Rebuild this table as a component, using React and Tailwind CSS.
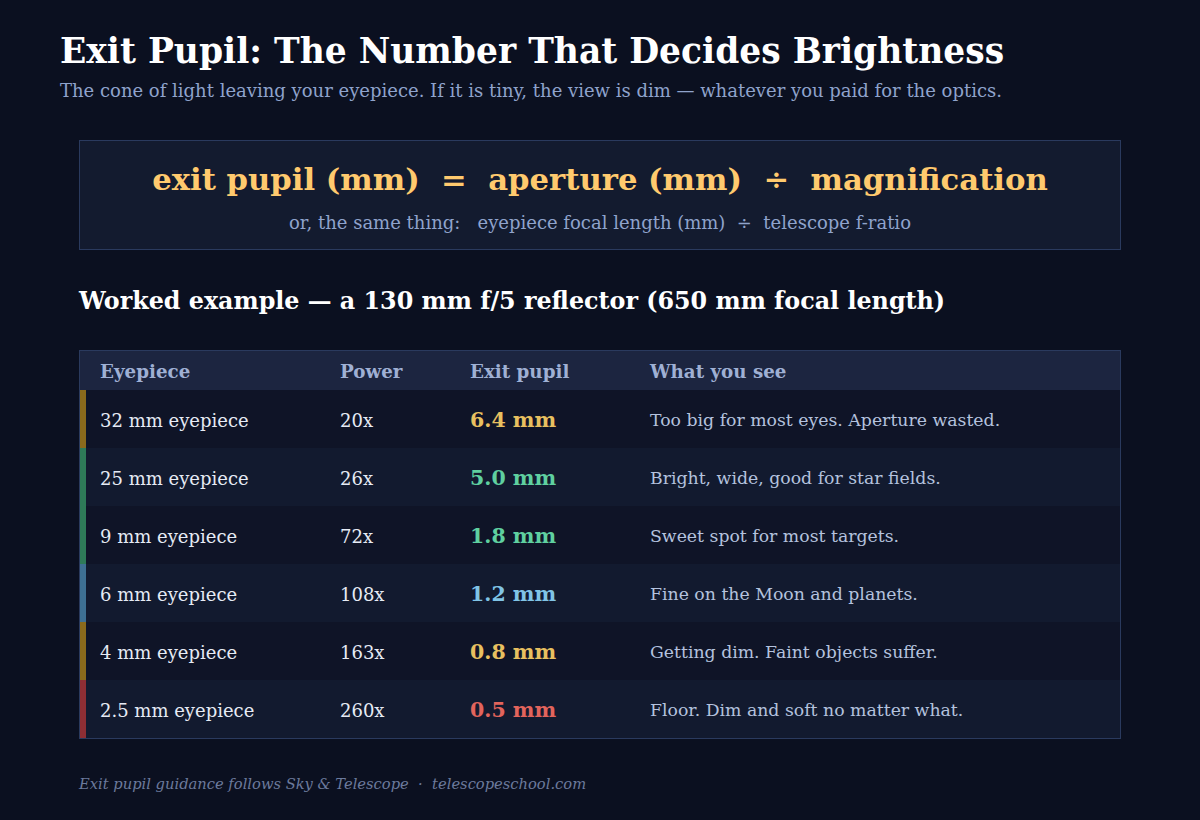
const rows = [
  { ep: '32 mm eyepiece', power: '20x', pupil: '6.4 mm', note: 'Too big for most eyes. Aperture wasted.', bar: 'bg-[#8a6a1c]', text: 'text-[#e8c060]' },
  { ep: '25 mm eyepiece', power: '26x', pupil: '5.0 mm', note: 'Bright, wide, good for star fields.', bar: 'bg-[#2e7a58]', text: 'text-[#5fd0a0]' },
  { ep: '9 mm eyepiece', power: '72x', pupil: '1.8 mm', note: 'Sweet spot for most targets.', bar: 'bg-[#2e7a58]', text: 'text-[#5fd0a0]' },
  { ep: '6 mm eyepiece', power: '108x', pupil: '1.2 mm', note: 'Fine on the Moon and planets.', bar: 'bg-[#3e7093]', text: 'text-[#80c4e6]' },
  { ep: '4 mm eyepiece', power: '163x', pupil: '0.8 mm', note: 'Getting dim. Faint objects suffer.', bar: 'bg-[#8a6a1c]', text: 'text-[#e8c060]' },
  { ep: '2.5 mm eyepiece', power: '260x', pupil: '0.5 mm', note: 'Floor. Dim and soft no matter what.', bar: 'bg-[#8e2e34]', text: 'text-[#e2645c]' },
]

export default function App() {
  return (
    <div className="min-h-[820px] w-[1200px] bg-[#0b1020] px-[60px] pt-[29px] font-['Georgia','DejaVu_Serif',serif]">
      {/* Header */}
      <h1 className="text-[34.5px] font-bold leading-[44px] text-white">
        Exit Pupil: The Number That Decides Brightness
      </h1>
      <p className="mt-[5px] text-[18px] leading-[26px] text-[#8fa3cc]">
        The cone of light leaving your eyepiece. If it is tiny, the view is dim — whatever you paid for the optics.
      </p>

      <div className="px-[19px]">
        {/* Formula */}
        <div className="mt-[36px] flex h-[110px] flex-col items-center justify-center border border-[#2a3a5e] bg-[#131b2f] pt-[3px]">
          <div className="whitespace-pre text-[30.7px] font-bold leading-[40px] text-[#ffca6e]">
            exit pupil (mm)  =  aperture (mm)  ÷  magnification
          </div>
          <div className="mt-[12px] whitespace-pre text-[18px] leading-[24px] text-[#8fa3cc]">
            or, the same thing:   eyepiece focal length (mm)  ÷  telescope f-ratio
          </div>
        </div>

        {/* Worked example */}
        <h2 className="mt-[35px] text-[23.8px] font-bold leading-[32px] text-white">
          Worked example — a 130 mm f/5 reflector (650 mm focal length)
        </h2>

        <div className="mt-[33px] border border-[#2a3a5e]">
          <div className="flex h-[39px] items-center bg-[#1c2540] pt-[3px] text-[18.3px] font-bold text-[#9fb0d4]">
            <div className="w-[260px] pl-[20px]">Eyepiece</div>
            <div className="w-[130px]">Power</div>
            <div className="w-[180px]">Exit pupil</div>
            <div className="flex-1">What you see</div>
          </div>
          {rows.map((r, i) => (
            <div key={r.ep} className={`flex h-[58px] items-center ${i % 2 === 0 ? 'bg-[#0f1427]' : 'bg-[#121a2f]'}`}>
              <div className={`h-full w-[6px] ${r.bar}`} />
              <div className="flex h-full flex-1 items-center pt-[3px]">
                <div className="w-[254px] pl-[14px] text-[18px] text-[#e6ebf5]">{r.ep}</div>
                <div className="w-[130px] text-[18px] text-[#e6ebf5]">{r.power}</div>
                <div className={`w-[180px] text-[20.5px] font-bold ${r.text}`}>{r.pupil}</div>
                <div className="flex-1 text-[17.3px] text-[#b4c2de]">{r.note}</div>
              </div>
            </div>
          ))}
        </div>

        <p className="mt-[34px] whitespace-pre text-[14.7px] italic text-[#6b7a9c]">
          Exit pupil guidance follows Sky &amp; Telescope  ·  telescopeschool.com
        </p>
      </div>
    </div>
  )
}
